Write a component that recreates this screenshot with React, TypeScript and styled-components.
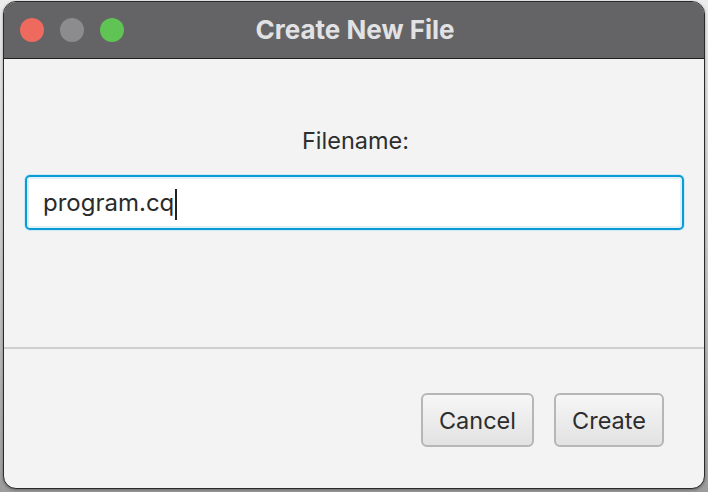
import React from 'react'
import styled, { createGlobalStyle } from 'styled-components'

const GlobalStyle = createGlobalStyle`
  html, body {
    margin: 0;
    padding: 0;
    width: 708px;
    height: 492px;
    overflow: hidden;
    background: linear-gradient(180deg, #ececec 0%, #c4c4c4 60%, #9c9c9c 100%);
    font-family: Inter, "Noto Sans", "Liberation Sans", sans-serif;
  }
`

const Desktop = styled.div`
  width: 708px;
  height: 492px;
  padding: 1px 3px 3px 3px;
  box-sizing: border-box;
`

const Window = styled.div`
  width: 702px;
  height: 488px;
  box-sizing: border-box;
  border: 1px solid #2a2a2a;
  border-radius: 13px;
  overflow: hidden;
  display: flex;
  flex-direction: column;
  background: #f3f3f3;
  box-shadow: 0 1px 3px rgba(0, 0, 0, 0.35);
`

const TitleBar = styled.div`
  position: relative;
  height: 56px;
  flex: none;
  background: #646466;
  border-bottom: 1px solid #1e1e1e;
  display: flex;
  align-items: center;
  justify-content: center;
`

const Lights = styled.div`
  position: absolute;
  left: 16px;
  top: 16px;
  display: flex;
  gap: 16px;
`

const Light = styled.span<{ $color: string }>`
  width: 24px;
  height: 24px;
  border-radius: 50%;
  background: ${p => p.$color};
`

const Title = styled.div`
  color: #e2e2e4;
  font-size: 26px;
  font-weight: 700;
  margin-top: -2px;
  margin-left: 2px;
`

const Content = styled.div`
  height: 290px;
  flex: none;
  box-sizing: border-box;
  padding: 67px 20px 0 21px;
  display: flex;
  flex-direction: column;
  align-items: stretch;
  border-bottom: 2px solid #cfcfcf;
`

const Label = styled.div`
  text-align: center;
  font-size: 23.5px;
  color: #2e2e2e;
  margin-bottom: 20px;
  margin-left: 2px;
`

const Field = styled.div`
  height: 55px;
  box-sizing: border-box;
  border: 2px solid #0a9ad6;
  border-radius: 5px;
  background: #ffffff;
  box-shadow: inset 0 0 0 2px #dff1fa, 0 0 0 1px #cfe9f5;
  display: flex;
  align-items: center;
  padding-left: 16px;
  font-size: 24px;
  color: #2b2b2b;
`

const Caret = styled.span`
  display: inline-block;
  width: 2px;
  height: 31px;
  background: #222;
  margin-left: 1px;
  margin-top: 4px;
`

const Footer = styled.div`
  flex: 1;
  display: flex;
  justify-content: flex-end;
  align-items: flex-start;
  gap: 20px;
  padding: 44px 40px 0 0;
`

const Button = styled.button<{ $width: number }>`
  width: ${p => p.$width}px;
  height: 54px;
  box-sizing: border-box;
  border: 2px solid #b6b6b6;
  border-radius: 6px;
  background: linear-gradient(180deg, #f6f6f6 0%, #e2e2e2 100%);
  font-family: inherit;
  font-size: 23.5px;
  color: #2d2d2d;
  padding: 0;
`

export default function App() {
  return (
    <>
      <GlobalStyle />
      <Desktop>
        <Window>
          <TitleBar>
            <Lights>
              <Light $color="#ee6a5e" />
              <Light $color="#8c8c8e" />
              <Light $color="#5fc454" />
            </Lights>
            <Title>Create New File</Title>
          </TitleBar>
          <Content>
            <Label>Filename:</Label>
            <Field>
              program.cq<Caret />
            </Field>
          </Content>
          <Footer>
            <Button $width={113}>Cancel</Button>
            <Button $width={110}>Create</Button>
          </Footer>
        </Window>
      </Desktop>
    </>
  )
}
